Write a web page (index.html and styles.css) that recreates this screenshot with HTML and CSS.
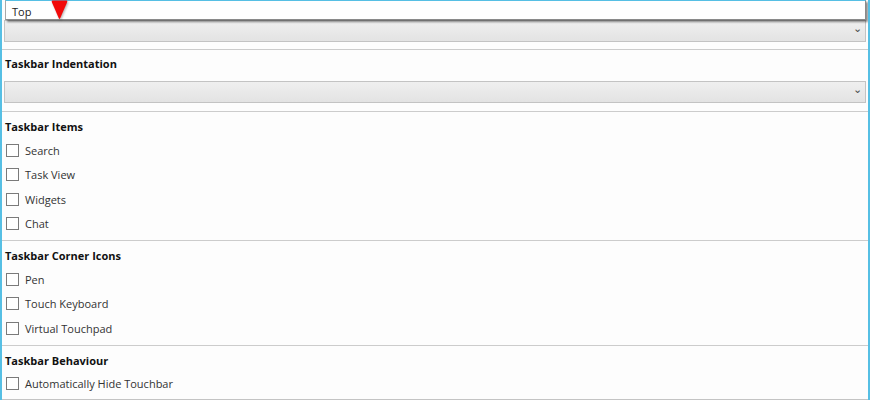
FILE: index.html
```html
<!DOCTYPE html>
<html lang="en">
<head>
<meta charset="utf-8">
<title>Taskbar Settings</title>
<link rel="stylesheet" href="styles.css">
</head>
<body>
<div class="window">
  <div class="section first">
    <div class="combo"><span class="chev">&#8964;</span></div>
    <div class="popup">
      <span class="popup-item">Top</span>
      <svg class="marker" width="17" height="20" viewBox="0 0 17 20"><path d="M1.5 0.5 H15.5 Q16.8 0.5 16 2.4 L9.2 18.2 Q8.5 19.6 7.8 18.2 L1 2.4 Q0.2 0.5 1.5 0.5 Z" fill="#f20a0a"/></svg>
    </div>
  </div>
  <div class="section">
    <div class="heading">Taskbar Indentation</div>
    <div class="combo"><span class="chev">&#8964;</span></div>
  </div>
  <div class="section list">
    <div class="heading">Taskbar Items</div>
    <label class="item"><span class="box"></span>Search</label>
    <label class="item"><span class="box"></span>Task View</label>
    <label class="item"><span class="box"></span>Widgets</label>
    <label class="item"><span class="box"></span>Chat</label>
  </div>
  <div class="section list">
    <div class="heading">Taskbar Corner Icons</div>
    <label class="item"><span class="box"></span>Pen</label>
    <label class="item"><span class="box"></span>Touch Keyboard</label>
    <label class="item"><span class="box"></span>Virtual Touchpad</label>
  </div>
  <div class="section list last">
    <div class="heading">Taskbar Behaviour</div>
    <label class="item"><span class="box"></span>Automatically Hide Touchbar</label>
  </div>
</div>
</body>
</html>
```
FILE: styles.css
```css
html, body {
  margin: 0;
  padding: 0;
  background: #ffffff;
}
body {
  font-family: "Open Sans", "Noto Sans", sans-serif;
  font-size: 11px;
  color: #262626;
}
.window {
  width: 870px;
  height: 400px;
  box-sizing: border-box;
  border-left: 2px solid #56bfe4;
  border-right: 2px solid #56bfe4;
  background: #fdfdfd;
  display: flex;
  flex-direction: column;
  overflow: hidden;
}
.section {
  border-top: 1px solid #cccccc;
  padding: 2px 0 8px 0;
  display: flex;
  flex-direction: column;
  flex-shrink: 0;
}
.section.first {
  border-top: none;
  position: relative;
  padding: 20px 0 7px 0;
}
.section.list {
  padding: 3px 0 4px 0;
}
.section.last {
  padding-bottom: 2.5px;
  border-bottom: 1px solid #c4c4c4;
}
.heading {
  font-weight: 700;
  color: #111;
  line-height: 24px;
  height: 24px;
  padding-left: 3px;
}
.list .heading {
  height: 23px;
  line-height: 24px;
}
.combo {
  margin: 5px 0 0 2px;
  width: 862px;
  height: 22px;
  box-sizing: border-box;
  border: 1px solid #c3c3c3;
  background: linear-gradient(#efefef, #e3e3e3);
  position: relative;
}
.first .combo {
  margin-top: 0;
}
.chev {
  position: absolute;
  right: 3px;
  top: 0px;
  font-size: 11px;
  line-height: 14px;
  color: #4a4a4a;
}
.popup {
  position: absolute;
  left: 3px;
  top: 0;
  width: 861px;
  height: 20px;
  box-sizing: border-box;
  background: #ffffff;
  border-top: 1px solid #56bfe4;
  border-left: 1px solid #a8a8a8;
  border-right: 1px solid #8a8a8a;
  border-bottom: 1px solid #8a8a8a;
  box-shadow: 2px 2px 2px rgba(0, 0, 0, 0.45);
}
.popup-item {
  display: block;
  padding: 3px 0 0 6px;
  line-height: 15px;
  color: #222;
}
.marker {
  position: absolute;
  left: 45px;
  top: -1px;
  filter: drop-shadow(1px 1px 1px rgba(0,0,0,0.3));
}
.item {
  display: flex;
  align-items: center;
  height: 24.5px;
  padding-left: 4px;
  color: #333;
}
.box {
  width: 13px;
  height: 13px;
  box-sizing: border-box;
  border: 1px solid #7a7a7a;
  background: #fff;
  margin-right: 6px;
}
```
